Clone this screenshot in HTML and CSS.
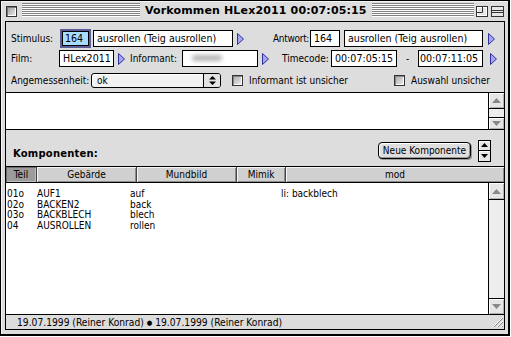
FILE: index.html
```html
<!DOCTYPE html>
<html>
<head>
<meta charset="utf-8">
<link rel="stylesheet" href="styles.css">
</head>
<body>
<div class="window">
  <div class="titlebar">
    <span class="closebox"></span>
    <span class="stripes stripes-left"></span>
    <span class="title">Vorkommen HLex2011 00:07:05:15</span>
    <span class="stripes stripes-right"></span>
    <svg class="wbox zoombox" width="12" height="11" viewBox="0 0 12 11"><rect x="0.5" y="0.5" width="11" height="10" fill="#e6e6e6" stroke="#333"/><rect x="1.5" y="1.5" width="9" height="8" fill="none" stroke="#fff"/><path d="M6.5 1 V6.5 H1" fill="none" stroke="#333"/></svg>
    <svg class="wbox shadebox" width="13" height="11" viewBox="0 0 13 11"><rect x="0.5" y="0.5" width="12" height="10" fill="#e6e6e6" stroke="#333"/><path d="M1 4.5 H12 M1 6.5 H12" stroke="#333"/></svg>
  </div>
  <div class="content">
    <div class="form">
      <div class="row r1">
        <span class="lbl w49">Stimulus:</span>
        <span class="field focus w31">164</span>
        <span class="field w140 ml2">ausrollen (Teig ausrollen)</span>
        <svg class="tri ml4" width="7" height="12" viewBox="0 0 7 12"><path d="M0.5 0.5 L6.5 6 L0.5 11.5 Z" fill="#a4a4f4" stroke="#30309a"/></svg>
        <span class="lbl w37 ml29 narrow">Antwort:</span>
        <span class="field w30">164</span>
        <span class="field w139 ml4">ausrollen (Teig ausrollen)</span>
        <svg class="tri ml5" width="7" height="12" viewBox="0 0 7 12"><path d="M0.5 0.5 L6.5 6 L0.5 11.5 Z" fill="#a4a4f4" stroke="#30309a"/></svg>
      </div>
      <div class="row r2">
        <span class="lbl w48">Film:</span>
        <span class="field w55">HLex2011</span>
        <svg class="tri ml4" width="7" height="12" viewBox="0 0 7 12"><path d="M0.5 0.5 L6.5 6 L0.5 11.5 Z" fill="#a4a4f4" stroke="#30309a"/></svg>
        <span class="lbl w52 ml5">Informant:</span>
        <span class="field w76"><span class="blur"></span></span>
        <svg class="tri ml4" width="7" height="12" viewBox="0 0 7 12"><path d="M0.5 0.5 L6.5 6 L0.5 11.5 Z" fill="#a4a4f4" stroke="#30309a"/></svg>
        <span class="lbl w49 ml13">Timecode:</span>
        <span class="field w66">00:07:05:15</span>
        <span class="dash">-</span>
        <span class="field w65 tight">00:07:11:05</span>
        <svg class="tri ml7" width="7" height="12" viewBox="0 0 7 12"><path d="M0.5 0.5 L6.5 6 L0.5 11.5 Z" fill="#a4a4f4" stroke="#30309a"/></svg>
      </div>
      <div class="row r3">
        <span class="lbl w80">Angemessenheit:</span>
        <span class="popup">
          <span class="popup-text">ok</span>
          <span class="popup-arrows"><svg width="7" height="9" viewBox="0 0 7 9"><path d="M3.5 0 L7 3.5 H0 Z M0 5.5 H7 L3.5 9 Z" fill="#000"/></svg></span>
        </span>
        <span class="cb ml11"></span>
        <span class="cblabel w145">Informant ist unsicher</span>
        <span class="cb"></span>
        <span class="cblabel">Auswahl unsicher</span>
      </div>
    </div>
    <div class="notes">
      <div class="vscroll small">
        <div class="sb-up"><svg width="9" height="5" viewBox="0 0 9 5"><path d="M4.5 0 L9 5 H0 Z" fill="#888"/></svg></div>
        <div class="sb-track"></div>
        <div class="sb-down"><svg width="9" height="5" viewBox="0 0 9 5"><path d="M0 0 H9 L4.5 5 Z" fill="#888"/></svg></div>
      </div>
    </div>
    <div class="panel">
      <span class="heading">Komponenten:</span>
      <span class="button">Neue Komponente</span>
      <span class="stepper">
        <span class="step up"><svg width="7" height="4" viewBox="0 0 7 4"><path d="M3.5 0 L7 4 H0 Z" fill="#000"/></svg></span>
        <span class="step down"><svg width="7" height="4" viewBox="0 0 7 4"><path d="M0 0 H7 L3.5 4 Z" fill="#000"/></svg></span>
      </span>
    </div>
    <div class="thead">
      <span class="th sel c-teil">Teil</span>
      <span class="th c-geb">Gebärde</span>
      <span class="th c-mund">Mundbild</span>
      <span class="th c-mimik">Mimik</span>
      <span class="th c-mod">mod</span>
    </div>
    <div class="list">
      <div class="rows">
        <div class="lrow"><span>01o</span><span>AUF1</span><span>auf</span><span>li: backblech</span></div>
        <div class="lrow"><span>02o</span><span>BACKEN2</span><span>back</span><span></span></div>
        <div class="lrow"><span>03o</span><span>BACKBLECH</span><span>blech</span><span></span></div>
        <div class="lrow"><span>04</span><span>AUSROLLEN</span><span>rollen</span><span></span></div>
      </div>
      <div class="vscroll big">
        <div class="sb-up"><svg width="9" height="5" viewBox="0 0 9 5"><path d="M4.5 0 L9 5 H0 Z" fill="#888"/></svg></div>
        <div class="sb-track"></div>
        <div class="sb-down"><svg width="9" height="5" viewBox="0 0 9 5"><path d="M0 0 H9 L4.5 5 Z" fill="#888"/></svg></div>
      </div>
    </div>
    <div class="status">
      <span class="status-text">19.07.1999 (Reiner Konrad) <span class="dot">●</span> 19.07.1999 (Reiner Konrad)</span>
      <svg class="grow" width="13" height="12" viewBox="0 0 13 12"><path d="M2 11 L12 1 M6 11 L12 5 M10 11 L12 9" stroke="#fff" stroke-width="1"/><path d="M3 11 L12 2 M7 11 L12 6 M11 11 L12 10" stroke="#888" stroke-width="1"/></svg>
    </div>
  </div>
</div>
</body>
</html>
```

FILE: styles.css
```css
* { box-sizing: border-box; margin: 0; padding: 0; }
html, body { width: 511px; height: 337px; overflow: hidden; background: #fff; }
body {
  font-family: "DejaVu Sans Condensed", "DejaVu Sans", sans-serif;
  font-stretch: condensed;
  font-size: 10px;
  color: #000;
}
.window {
  width: 510px;
  height: 336px;
  border-style: solid;
  border-color: #000;
  border-width: 1px 2px 2px 1px;
  background: #dddddd;
  padding: 0 3px 4px 4px;
  display: flex;
  flex-direction: column;
  box-shadow: inset 1px 1px 0 #f4f4f4;
}
.titlebar {
  height: 20px;
  margin: 0 -3px 0 -4px;
  display: flex;
  align-items: flex-start;
  flex-shrink: 0;
}
.closebox {
  width: 11px;
  height: 11px;
  margin: 5px 0 0 5px;
  border: 1px solid #333;
  background: linear-gradient(135deg, #9a9a9a, #eeeeee);
  box-shadow: inset 1px 1px 0 #777, inset -1px -1px 0 #fff;
}
.stripes {
  height: 14px;
  margin-top: 2px;
  background: repeating-linear-gradient(to bottom, #808080 0 1px, #ffffff 1px 2px);
}
.stripes-left { width: 118px; margin-left: 5px; }
.stripes-right { flex: 1; }
.title {
  font-family: "DejaVu Sans", sans-serif;
  font-stretch: normal;
  font-weight: bold;
  font-size: 11px;
  letter-spacing: 0.15px;
  line-height: 19px;
  padding: 0 5px;
  white-space: nowrap;
}
.wbox { margin-top: 5px; display: block; }
.zoombox { margin-left: 2px; }
.shadebox { margin-left: 3px; margin-right: 4px; }

.content {
  height: 309px;
  border: 1px solid #000;
  display: flex;
  flex-direction: column;
  background: #dddddd;
}
.form { height: 70px; padding: 7px 0 0 5px; flex-shrink: 0; }
.row { display: flex; align-items: center; white-space: nowrap; }
.r1 { height: 19px; }
.r2 { height: 17px; margin-top: 2px; }
.r3 { height: 15px; margin-top: 6px; }
.lbl { display: block; flex-shrink: 0; }
.lbl.narrow { letter-spacing: -0.3px; }
.field {
  display: block;
  flex-shrink: 0;
  height: 17px;
  border: 1px solid #000;
  background: #fff;
  padding: 0 3px;
  font-size: 10.6px;
  line-height: 15px;
  overflow: hidden;
  white-space: nowrap;
}
.field.focus {
  height: 19px;
  border: 2px solid #5c5c98;
  box-shadow: inset 0 0 0 1px #000;
  background: #a8dcff;
  line-height: 15px;
  padding-left: 3px;
}
.field.tight { padding-left: 1px; }
.tri { display: block; flex-shrink: 0; }
.blur {
  display: block;
  width: 30px;
  height: 6px;
  margin: 4px 0 0 6px;
  background: #b4b4b4;
  border-radius: 3px;
  filter: blur(2px);
}
.dash { display: block; width: 21px; text-align: center; flex-shrink: 0; }
.w30 { width: 30px; } .w31 { width: 31px; } .w37 { width: 37px; }
.w48 { width: 48px; } .w49 { width: 49px; } .w52 { width: 52px; }
.w55 { width: 55px; } .w65 { width: 65px; } .w66 { width: 66px; }
.w76 { width: 76px; } .w80 { width: 80px; } .w139 { width: 139px; }
.w140 { width: 140px; } .w145 { width: 145px; }
.ml2 { margin-left: 2px; } .ml4 { margin-left: 4px; } .ml5 { margin-left: 5px; }
.ml7 { margin-left: 7px; } .ml11 { margin-left: 11px; } .ml13 { margin-left: 13px; }
.ml29 { margin-left: 29px; }

.popup {
  display: flex;
  width: 130px;
  height: 15px;
  border: 1px solid #000;
  border-radius: 3px;
  background: #f2f2f2;
  box-shadow: inset 1px 1px 0 #fff;
  flex-shrink: 0;
}
.popup-text { flex: 1; padding-left: 5px; line-height: 13px; }
.popup-arrows {
  width: 17px;
  border-left: 1px solid #000;
  display: flex;
  align-items: center;
  justify-content: center;
  background: #e4e4e4;
  border-radius: 0 2px 2px 0;
}
.popup-arrows svg { display: block; }
.cb {
  display: block;
  width: 11px;
  height: 11px;
  border: 1px solid #333;
  background: linear-gradient(135deg, #aaaaaa, #eeeeee);
  box-shadow: inset 1px 1px 0 #888, inset -1px -1px 0 #fff;
  flex-shrink: 0;
}
.cblabel { display: block; margin-left: 6px; flex-shrink: 0; }

.notes {
  height: 38px;
  border-top: 1px solid #000;
  border-bottom: 1px solid #000;
  background: #fff;
  display: flex;
  justify-content: flex-end;
  flex-shrink: 0;
}
.vscroll {
  width: 16px;
  border-left: 1px solid #000;
  display: flex;
  flex-direction: column;
  background: #ebebeb;
}
.vscroll .sb-up, .vscroll .sb-down {
  display: flex;
  align-items: center;
  justify-content: center;
  background: #e6e6e6;
  box-shadow: inset 1px 1px 0 #fff, inset -1px -1px 0 #b0b0b0;
}
.vscroll svg { display: block; }
.vscroll .sb-up { border-bottom: 1px solid #000; }
.vscroll .sb-down { border-top: 1px solid #000; }
.vscroll .sb-track { flex: 1; background: #ededed; }
.small .sb-up { height: 16px; }
.small .sb-down { height: 12px; }
.big .sb-up { height: 17px; }
.big .sb-down { height: 16px; }

.panel {
  height: 36px;
  display: flex;
  align-items: center;
  padding: 8px 13px 3px 7px;
  flex-shrink: 0;
}
.heading {
  font-family: "DejaVu Sans", sans-serif;
  font-stretch: normal;
  font-weight: bold;
  font-size: 10px;
  letter-spacing: 0.2px;
  margin-top: 5px;
  margin-right: auto;
}
.button {
  display: block;
  width: 93px;
  height: 17px;
  border: 1px solid #000;
  border-radius: 4px;
  background: #dedede;
  box-shadow: inset 1px 1px 0 #fff, inset -1px -1px 0 #999, 1px 1px 0 #999;
  text-align: center;
  line-height: 15px;
}
.stepper {
  display: flex;
  flex-direction: column;
  width: 13px;
  height: 22px;
  margin-left: 7px;
  border: 1px solid #000;
  background: #e6e6e6;
}
.step { flex: 1; display: flex; align-items: center; justify-content: center; box-shadow: inset 1px 1px 0 #fff; }
.step svg { display: block; }
.step.up { border-bottom: 1px solid #000; }

.thead {
  height: 17px;
  display: flex;
  gap: 1px;
  background: #444;
  border-top: 1px solid #000;
  border-bottom: 1px solid #000;
  flex-shrink: 0;
}
.th {
  display: block;
  height: 15px;
  line-height: 15px;
  text-align: center;
  background: #d0d0d0;
  box-shadow: inset 1px 1px 0 #f6f6f6, inset -1px -1px 0 #8c8c8c;
}
.th.sel { background: #9c9c9c; box-shadow: inset 1px 1px 0 #6c6c6c, inset -1px -1px 0 #bdbdbd; }
.c-teil { width: 30px; }
.c-geb { width: 99px; }
.c-mund { width: 99px; }
.c-mimik { width: 48px; }
.c-mod { flex: 1; }

.list {
  height: 132px;
  border-bottom: 1px solid #000;
  background: #fff;
  display: flex;
  flex-shrink: 0;
}
.rows { flex: 1; padding: 6px 0 0 1px; }
.lrow {
  display: grid;
  grid-template-columns: 30px 93px 151px 1fr;
  height: 10.67px;
  line-height: 10.67px;
  white-space: nowrap;
}
.status {
  height: 14px;
  display: flex;
  align-items: center;
  padding-left: 11px;
  flex-shrink: 0;
}
.status-text { flex: 1; white-space: nowrap; font-size: 10.2px; }
.dot { font-size: 7px; vertical-align: 1px; }
.grow { display: block; margin-right: 0; }
```
